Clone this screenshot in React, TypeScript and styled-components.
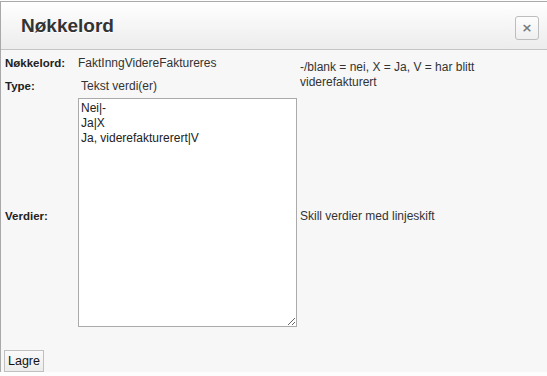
import React from "react";
import styled, { createGlobalStyle } from "styled-components";

const Global = createGlobalStyle`
  html, body { margin: 0; padding: 0; background: #fdfdfd; }
  body { font-family: "Liberation Sans", Arial, sans-serif; }
`;

const Dialog = styled.div`
  margin-top: 1px;
  width: 547px;
  height: 371px;
  box-sizing: border-box;
  border-top: 1px solid #a9a9a9;
  border-left: 1px solid #a9a9a9;
  background: #f7f7f7;
  display: flex;
  flex-direction: column;
`;

const Header = styled.div`
  height: 49px;
  box-sizing: border-box;
  border-bottom: 1px solid #c4c4c4;
  background: linear-gradient(#ffffff, #ececec);
  display: flex;
  align-items: center;
  justify-content: space-between;
  padding: 0 8px 0 20px;
`;

const Title = styled.h1`
  margin: 0;
  font-size: 19px;
  font-weight: bold;
  color: #333;
  text-shadow: 0 1px 0 #fff;
`;

const CloseButton = styled.button`
  width: 24px;
  height: 24px;
  margin-top: 4px;
  padding: 0;
  border: 1px solid #bdbdbd;
  border-radius: 3px;
  background: linear-gradient(#fdfdfd, #efefef);
  color: #7a7a7a;
  font-family: "DejaVu Sans", sans-serif;
  font-size: 13px;
  font-weight: bold;
  line-height: 20px;
`;

const Form = styled.div`
  display: grid;
  grid-template-columns: 73px 222px 1fr;
  grid-template-rows: 23px 23px 237px;
  padding: 1px 0 0 4px;
  font-size: 12px;
  color: #222;
`;

const Label = styled.div`
  font-weight: bold;
  font-size: 11.5px;
  align-self: center;
`;

const Value = styled.div<{ $indent?: number }>`
  align-self: center;
  padding-left: ${(p) => p.$indent ?? 0}px;
  color: #333;
`;

const Hint = styled.div<{ $span?: number }>`
  align-self: center;
  grid-row: span ${(p) => p.$span ?? 1};
  line-height: 15px;
  color: #333;
  padding-top: 2px;
`;

const Area = styled.textarea`
  align-self: start;
  margin: 1px 0 0 0;
  width: 219px;
  height: 229px;
  box-sizing: border-box;
  border: 1px solid #aaa;
  background: #fff;
  padding: 2px 2px;
  font-family: "Liberation Sans", Arial, sans-serif;
  font-size: 12px;
  line-height: 15px;
  color: #222;
  resize: both;
`;

const Footer = styled.div`
  padding: 16px 0 0 3px;
`;

const SaveButton = styled.button`
  height: 22px;
  padding: 0 3px;
  border: 1px solid #c0c0c0;
  background: linear-gradient(#fafafa, #ececec);
  font-family: "Liberation Sans", Arial, sans-serif;
  font-size: 12.5px;
  color: #111;
`;

export default function App() {
  return (
    <>
      <Global />
      <Dialog>
        <Header>
          <Title>Nøkkelord</Title>
          <CloseButton aria-label="Lukk">×</CloseButton>
        </Header>
        <Form>
          <Label>Nøkkelord:</Label>
          <Value>FaktInngVidereFaktureres</Value>
          <Hint $span={2}>
            -/blank = nei, X = Ja, V = har blitt
            <br />
            viderefakturert
          </Hint>
          <Label>Type:</Label>
          <Value $indent={3}>Tekst verdi(er)</Value>
          <Label>Verdier:</Label>
          <Area defaultValue={"Nei|-\nJa|X\nJa, viderefakturerert|V"} />
          <Hint>Skill verdier med linjeskift</Hint>
        </Form>
        <Footer>
          <SaveButton>Lagre</SaveButton>
        </Footer>
      </Dialog>
    </>
  );
}
